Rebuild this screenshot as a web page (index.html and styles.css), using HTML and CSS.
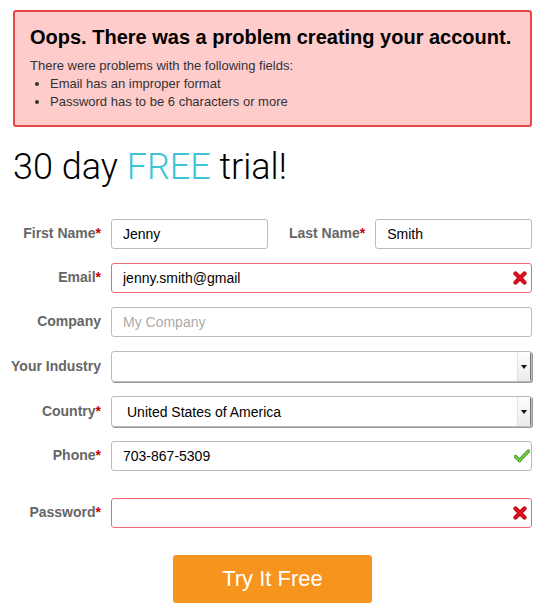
FILE: index.html
```html
<!DOCTYPE html>
<html>
<head>
<meta charset="utf-8">
<link rel="stylesheet" href="styles.css">
</head>
<body>
<div class="page">
  <div class="alert">
    <h2 class="alert-title">Oops. There was a problem creating your account.</h2>
    <p class="alert-text">There were problems with the following fields:</p>
    <ul class="alert-list">
      <li>Email has an improper format</li>
      <li>Password has to be 6 characters or more</li>
    </ul>
  </div>

  <h1 class="title">30 day <span class="free">FREE</span> trial!</h1>

  <form class="form">
    <div class="row">
      <label class="label"><span>First Name</span><span class="req">*</span></label>
      <div class="field"><input class="input" type="text" value="Jenny"></div>
      <label class="label label-inline"><span>Last Name</span><span class="req">*</span></label>
      <div class="field"><input class="input" type="text" value="Smith"></div>
    </div>

    <div class="row">
      <label class="label"><span>Email</span><span class="req">*</span></label>
      <div class="field">
        <input class="input input-error" type="text" value="jenny.smith@gmail">
        <svg class="status-icon icon-x" width="14" height="14" viewBox="0 0 14 14">
          <path d="M2.5 2.5 L11.5 11.5 M11.5 2.5 L2.5 11.5" stroke="#b3000c" stroke-width="4.2" stroke-linecap="round"/>
          <path d="M2.5 2.5 L11.5 11.5 M11.5 2.5 L2.5 11.5" stroke="#e0101e" stroke-width="2.6" stroke-linecap="round"/>
        </svg>
      </div>
    </div>

    <div class="row">
      <label class="label"><span>Company</span></label>
      <div class="field"><input class="input" type="text" placeholder="My Company"></div>
    </div>

    <div class="row">
      <label class="label"><span>Your Industry</span></label>
      <div class="field">
        <div class="select"><span class="select-value"></span><span class="select-btn"></span></div>
      </div>
    </div>

    <div class="row">
      <label class="label"><span>Country</span><span class="req">*</span></label>
      <div class="field">
        <div class="select"><span class="select-value">United States of America</span><span class="select-btn"></span></div>
      </div>
    </div>

    <div class="row">
      <label class="label"><span>Phone</span><span class="req">*</span></label>
      <div class="field">
        <input class="input" type="text" value="703-867-5309">
        <svg class="status-icon icon-check" width="16" height="14" viewBox="0 0 16 14">
          <path d="M1.5 7.5 L5.5 11.5 L14.5 2" fill="none" stroke="#3d9a1f" stroke-width="3.4" stroke-linecap="round" stroke-linejoin="round"/>
          <path d="M1.5 7.5 L5.5 11.5 L14.5 2" fill="none" stroke="#7fd45a" stroke-width="1.6" stroke-linecap="round" stroke-linejoin="round"/>
        </svg>
      </div>
    </div>

    <div class="row row-password">
      <label class="label"><span>Password</span><span class="req">*</span></label>
      <div class="field">
        <input class="input input-error" type="password" value="">
        <svg class="status-icon icon-x" width="14" height="14" viewBox="0 0 14 14">
          <path d="M2.5 2.5 L11.5 11.5 M11.5 2.5 L2.5 11.5" stroke="#b3000c" stroke-width="4.2" stroke-linecap="round"/>
          <path d="M2.5 2.5 L11.5 11.5 M11.5 2.5 L2.5 11.5" stroke="#e0101e" stroke-width="2.6" stroke-linecap="round"/>
        </svg>
      </div>
    </div>

    <div class="actions">
      <button class="btn" type="button">Try It Free</button>
    </div>
  </form>
</div>
</body>
</html>
```

FILE: styles.css
```css
* { box-sizing: border-box; }

body {
  margin: 0;
  background: #fff;
  font-family: "Liberation Sans", Arial, Helvetica, sans-serif;
  color: #000;
}

.page {
  padding: 10px 16px 0 13px;
}

.alert {
  background: #ffcccc;
  border: 2px solid #e84848;
  border-radius: 3px;
  padding: 13px 15px 14px 15px;
}

.alert-title {
  margin: 0;
  font-size: 20px;
  line-height: 24px;
  font-weight: bold;
  color: #000;
}

.alert-text {
  margin: 8px 0 0 0;
  font-size: 13px;
  line-height: 18px;
  color: #333;
}

.alert-list {
  margin: 0;
  padding-left: 20px;
  font-size: 13px;
  line-height: 18px;
  color: #333;
}

.title {
  margin: 19px 0 0 0;
  font-family: Roboto, "Liberation Sans", sans-serif;
  font-weight: 300;
  font-size: 36px;
  line-height: 42px;
  color: #000;
}

.free {
  color: #3fc3d9;
}

.form {
  margin-top: 31px;
}

.row {
  display: flex;
  align-items: center;
  gap: 10px;
  margin-bottom: 14px;
}

.row-password {
  margin-top: 27px;
  margin-bottom: 27px;
}

.label {
  flex: 0 0 88px;
  min-width: 0;
  display: flex;
  justify-content: flex-end;
  font-size: 14px;
  line-height: 16px;
  font-weight: bold;
  color: #666;
  white-space: nowrap;
  margin-top: -2px;
}

.label-inline {
  flex: 0 0 auto;
  margin-left: 11px;
}

.req {
  color: #c00;
}

.field {
  flex: 1 1 0;
  position: relative;
  min-width: 0;
}

.input {
  display: block;
  width: 100%;
  height: 30px;
  border: 1px solid #bbb;
  border-radius: 3px;
  padding: 0 10px 0 11px;
  font-family: "Liberation Sans", Arial, sans-serif;
  font-size: 14px;
  color: #000;
  background: #fff;
  outline: none;
}

.input::placeholder {
  color: #aaa;
}

.input-error {
  border-color: #ee6a72;
}

.status-icon {
  position: absolute;
  top: 50%;
  transform: translateY(-50%);
}

.icon-x {
  right: 5px;
}

.icon-check {
  right: 2px;
}

.select {
  display: flex;
  align-items: center;
  height: 31px;
  border: 1px solid #bbb;
  border-radius: 3px;
  background: #fff;
  box-shadow: 1px 1px 0 #9a9a9a;
  overflow: hidden;
}

.select-value {
  flex: 1;
  padding-left: 15px;
  font-size: 14px;
  color: #000;
}

.select-btn {
  position: relative;
  width: 14px;
  height: 100%;
  background: linear-gradient(#fdfdfd, #ebebeb);
  border-left: 1px solid #e2e2e2;
  border-right: 1px solid #777;
}

.select-btn::after {
  content: "";
  position: absolute;
  left: 3px;
  top: 13px;
  border-left: 3px solid transparent;
  border-right: 3px solid transparent;
  border-top: 4px solid #111;
}

.actions {
  display: flex;
  justify-content: center;
}

.btn {
  width: 199px;
  height: 48px;
  border: none;
  border-radius: 3px;
  background: #f7941e;
  color: #fff;
  font-family: "Liberation Sans", Arial, sans-serif;
  font-size: 22px;
  cursor: pointer;
}
```
